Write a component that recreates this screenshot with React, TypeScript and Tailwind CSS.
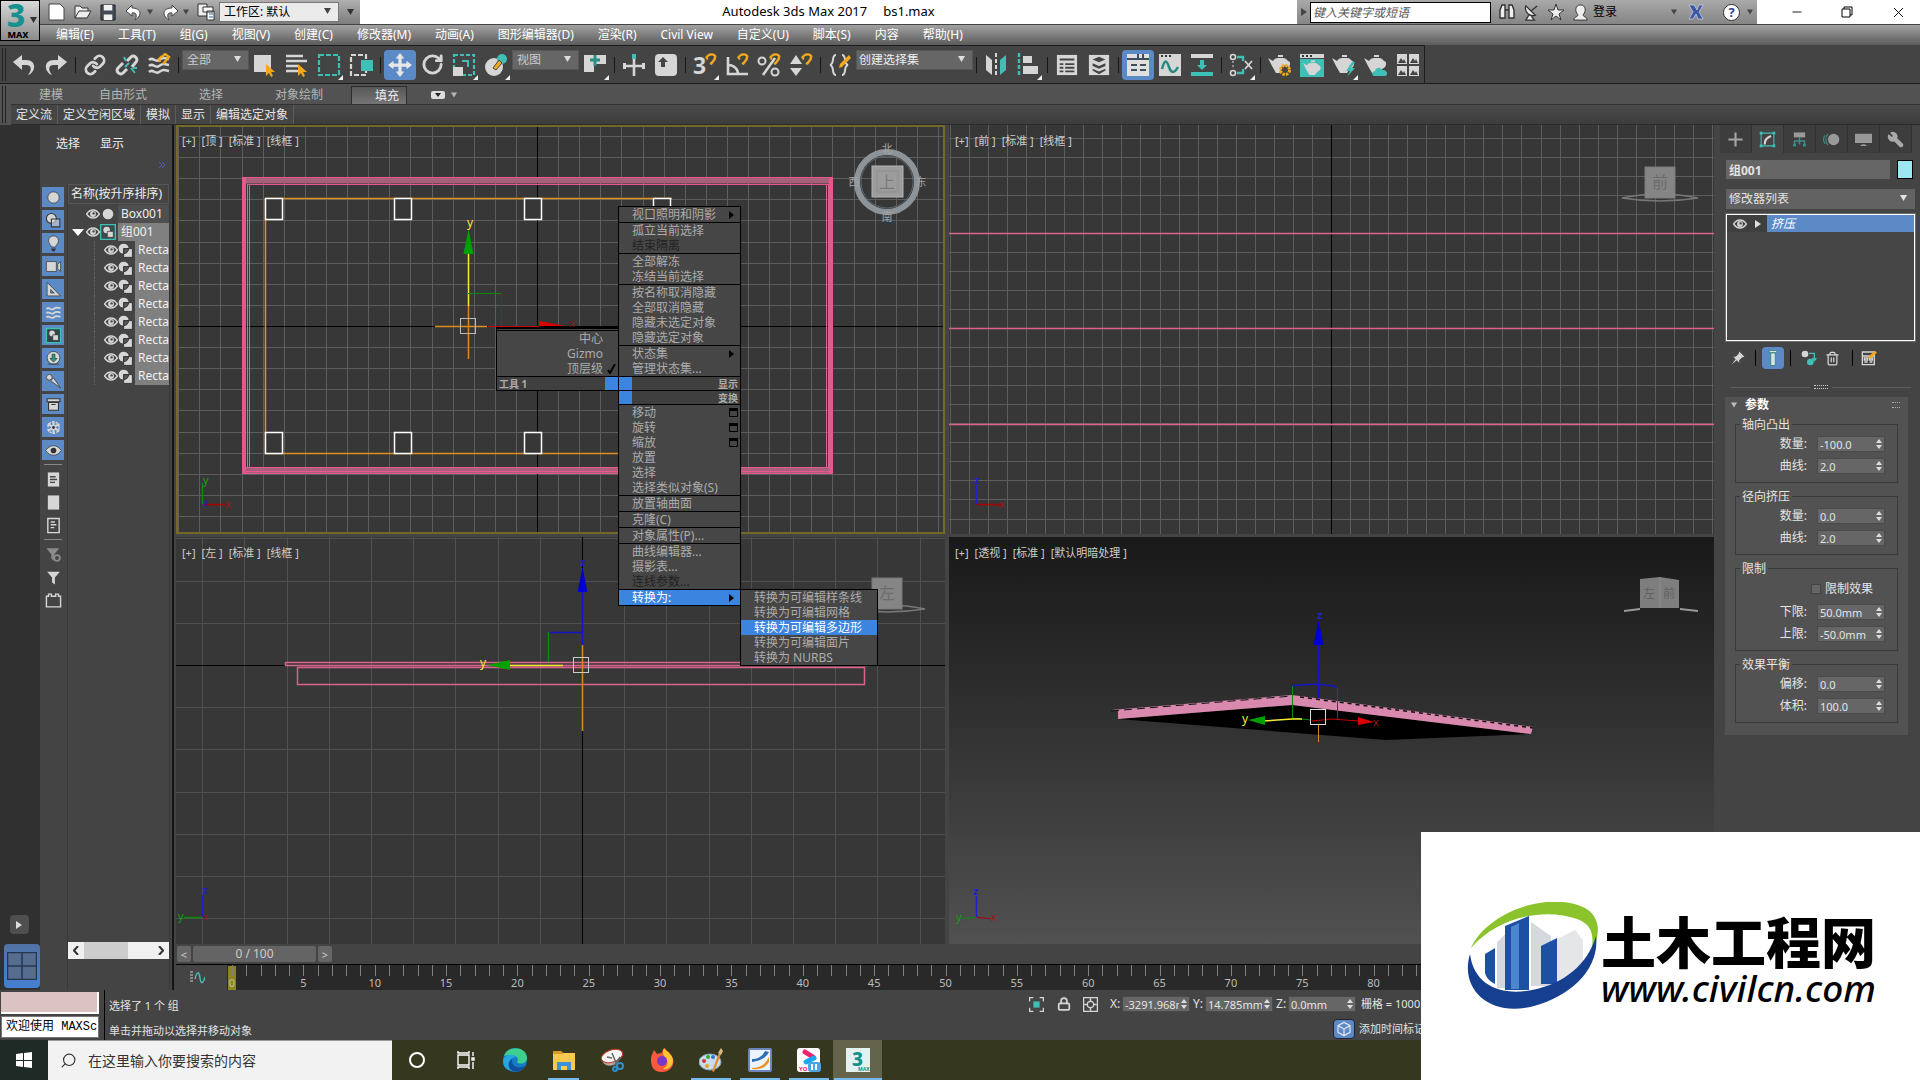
import React from 'react';
import clsx from 'clsx';
import { Link, Lock, Minus, RotateCw, Trash2, Wrench, X, Search } from 'lucide-react';

const LIGHT = '#d6d6d6';
const TEAL = '#3fbfb5';
const ORANGE = '#f2a91e';
const PINK = '#e8568f';

type IconProps = { children: React.ReactNode; size?: number; box?: number };

const Icon: React.FC<IconProps> = ({ children, size = 24, box = 24 }) => (
  <svg width={size} height={size} viewBox={`0 0 ${box} ${box}`} fill="none" className="shrink-0">
    {children}
  </svg>
);

/* ---------- icons ---------- */

const Cursor = () => <path d="M13 11v12l3-3 2 4 2-1-2-4h4z" fill={ORANGE} />;
const Magnet = () => (
  <path d="M13 5c3-5 8-4 9-2 1 3-2 5-4 8M13 5l2 1M17 10l2 1" stroke={ORANGE} strokeWidth="2.4" />
);
const Teapot = () => (
  <path d="M0 5l5 3c1-2 3-3 5-3h5c3 0 4 2 5 3 2 0 3 3 1 6l-4 3-2 3H8l-4-7zM10 2h5v2h-5z" fill={LIGHT} />
);
const Waves = () => (
  <path d="M2 7c4-4 6 3 10 0s6-2 10-1M2 13c4-4 6 3 10 0s6-2 10-1M2 19c4-4 6 3 10 0s6-2 10-1" stroke={LIGHT} strokeWidth="2.5" />
);
const Eye = ({ size = 14 }: { size?: number }) => (
  <Icon size={size}>
    <path d="M1 12c6-9 16-9 22 0-6 9-16 9-22 0z" stroke={LIGHT} strokeWidth="2.4" />
    <circle cx="12" cy="12" r="5" fill={LIGHT} />
    <circle cx="13" cy="11" r="2" fill="#444" />
  </Icon>
);
const Shapes = ({ size = 18 }: { size?: number }) => (
  <Icon size={size}>
    <circle cx="9" cy="9" r="8" fill={LIGHT} />
    <path d="M9 9h14v14H9z" fill={LIGHT} stroke="#333" strokeWidth="1.5" />
    <path d="M9 9h8a8 8 0 0 1-8 8z" fill="#555" stroke="#333" strokeWidth="1.5" />
  </Icon>
);
const GroupIcon = ({ size = 16 }: { size?: number }) => (
  <Icon size={size}>
    <path d="M1 1h22v22H1z" stroke={TEAL} strokeWidth="2" fill="#3b4a4a" />
    <circle cx="10" cy="9" r="5" fill={LIGHT} />
    <path d="M11 11h9v9h-9z" fill={LIGHT} stroke="#333" />
  </Icon>
);

type Tool = { name: string; icon?: React.ReactNode; on?: boolean; fly?: boolean; options?: string; wide?: boolean };

const SEP: Tool = { name: 'sep' };

const tools: Tool[] = [
  { name: '撤消', icon: <Icon><path d="M10 2v5h4c11 0 10 12 2 15 4-5 4-10-2-10h-4v5L1 9z" fill={LIGHT} /></Icon> },
  { name: '重做', icon: <Icon><path d="M14 2v5h-4C-1 7 0 19 8 22c-4-5-4-10 2-10h4v5l9-8z" fill={LIGHT} /></Icon> },
  SEP,
  { name: '链接', icon: <Link size={22} color={LIGHT} strokeWidth={3} /> },
  { name: '取消链接', icon: (
    <Icon>
      <path d="M12 16l-4 4c-3 3-8-2-5-5l5-5M12 8l4-4c3-3 8 2 5 5l-4 5" stroke={LIGHT} strokeWidth="3" />
      <path d="M10 14l4-4M16 15l4 5M9 4l2 4M18 15h4" stroke={TEAL} strokeWidth="2" />
    </Icon>) },
  { name: '绑定到空间扭曲', icon: <Icon><Waves /><path d="M13 9l-1-3 3-3M15 4l3-3 4 3-6 7" stroke={ORANGE} strokeWidth="2.4" /></Icon> },
  SEP,
  { name: '选择过滤器', options: '全部' },
  { name: '选择对象', icon: <Icon><path d="M1 2h17v17H1z" fill={LIGHT} /><Cursor /></Icon> },
  { name: '按名称选择', icon: <Icon><path d="M1 3h17M1 8h21M1 13h12M1 18h12" stroke={LIGHT} strokeWidth="2.4" /><Cursor /></Icon> },
  { name: '矩形选择区域', fly: true, icon: <Icon><path d="M2 2h20v20H2z" stroke={TEAL} strokeWidth="2.2" strokeDasharray="5 2" /></Icon> },
  { name: '窗口/交叉', icon: <Icon><path d="M2 2h15v20H2z" stroke={LIGHT} strokeWidth="2.2" strokeDasharray="5 2" /><path d="M12 7h12v11H12z" fill={TEAL} /></Icon> },
  SEP,
  { name: '选择并移动', on: true, icon: (
    <Icon size={26}>
      <path d="M12 1l4 5h-2.500v4.500h4.500V8l5 4-5 4v-2.500h-4.500v4.500H16l-4 5-4-5h2.500v-4.500H6V16l-5-4 5-4v2.500h4.500V6H8z" fill="#e6e6e6" />
    </Icon>) },
  { name: '选择并旋转', icon: <RotateCw size={23} color={LIGHT} strokeWidth={3} /> },
  { name: '选择并均匀缩放', fly: true, icon: (
    <Icon>
      <path d="M2 2h20v20H2z" stroke={TEAL} strokeWidth="2.2" strokeDasharray="4 2" />
      <path d="M1 14h10v9H1z" fill={LIGHT} />
      <path d="M10 8h6v6" stroke={TEAL} strokeWidth="2" />
    </Icon>) },
  { name: '选择并放置', fly: true, icon: <Icon><circle cx="10" cy="14" r="9" fill={LIGHT} /><circle cx="18" cy="6" r="5" fill={TEAL} /><path d="M9 15l6-8 3 3-6 7z" fill={ORANGE} stroke="#444" /></Icon> },
  { name: '参考坐标系', options: '视图' },
  { name: '使用轴点中心', fly: true, icon: <Icon><path d="M1 2h10v17H1zM11 2h12v9H11z" fill={LIGHT} /><path d="M12 2v11M7 7h10" stroke="#2a8f86" strokeWidth="3" /></Icon> },
  SEP,
  { name: '选择并操纵', icon: <Icon><path d="M12 5v18M1 13h22" stroke={LIGHT} strokeWidth="2.600" /><path d="M10 1h4v5h-4z" fill={TEAL} /><path d="M1 10h3v6H1zM20 10h3v6h-3z" fill={LIGHT} /></Icon> },
  { name: '键盘快捷键覆盖切换', icon: <Icon><rect x="1" y="1" width="22" height="22" rx="4" fill={LIGHT} /><path d="M9 4l5 5h-3v5H7V9H4z" fill="#444" /></Icon> },
  SEP,
  { name: '捕捉开关', fly: true, icon: <Icon><text x="0" y="21" fontSize="23" fontWeight="700" fill={LIGHT}>3</text><Magnet /></Icon> },
  { name: '角度捕捉切换', icon: <Icon><path d="M3 4v17h20M3 12c6 0 10 4 10 9" stroke={LIGHT} strokeWidth="2.600" /><Magnet /></Icon> },
  { name: '百分比捕捉切换', icon: <Icon><path d="M18 5L6 22" stroke={LIGHT} strokeWidth="2.500" /><circle cx="5" cy="8" r="3.500" stroke={LIGHT} strokeWidth="2" /><circle cx="18" cy="19" r="3.500" stroke={LIGHT} strokeWidth="2" /><Magnet /></Icon> },
  { name: '微调器捕捉切换', icon: <Icon><path d="M7 2l6 9H1zM7 23l6-8H1z" fill={LIGHT} /><Magnet /></Icon> },
  SEP,
  { name: '编辑命名选择集', icon: <Icon><path d="M8 2C3 2 7 11 2 12c5 1 1 10 6 10M14 2c5 0 1 9 6 10-5 1-1 10-6 10" stroke={LIGHT} strokeWidth="2" /><path d="M11 15l1-4 9-9 2 3-9 9z" fill={ORANGE} /></Icon> },
  { name: '命名选择集', options: '创建选择集', wide: true },
  SEP,
  { name: '镜像', icon: <Icon><path d="M2 2l6 5v15l-6-5z" fill={LIGHT} /><path d="M22 2l-6 5v15l6-5z" fill={TEAL} /><path d="M12 0v24" stroke={LIGHT} strokeWidth="2" strokeDasharray="4 2" /></Icon> },
  { name: '对齐', fly: true, icon: <Icon><path d="M3 0v24" stroke={TEAL} strokeWidth="2.400" strokeDasharray="4 2" /><path d="M7 3h9v7H7zM7 13h15v8H7z" fill={LIGHT} /></Icon> },
  SEP,
  { name: '层资源管理器', icon: <Icon size={22}><path d="M1 1h22v22H1z" fill={LIGHT} /><path d="M4 6h16M4 11h4M10 11h10M4 15h4M10 15h10M4 19h4M10 19h10" stroke="#444" strokeWidth="2" /></Icon> },
  { name: '层列表', icon: <Icon size={22}><path d="M1 1h22v22H1z" fill={LIGHT} /><path d="M5 6l7-3 7 3-7 3zM5 10l7 3 7-3v3l-7 3-7-3zM5 16l7 3 7-3v2l-7 4-7-4z" fill="#444" /></Icon> },
  SEP,
  { name: '显示功能区', on: true, icon: <Icon><path d="M1 1h22v22H1z" fill="#e0e0e0" /><path d="M1 6h22M12 1v5M17 1v5M5 12h6M14 12h6M5 17h6M14 17h6" stroke="#3f4d62" strokeWidth="2" /></Icon> },
  { name: '曲线编辑器', icon: <Icon><path d="M1 1h22v22H1z" fill={LIGHT} /><path d="M3 3h2M7 3h2M11 3h2" stroke="#333" strokeWidth="2" /><path d="M4 16c3-11 5-8 7-2s5 7 9 0" stroke="#23887f" strokeWidth="2.500" /></Icon> },
  { name: '图解视图', icon: <Icon><path d="M1 1h22v4H1z" fill={LIGHT} /><path d="M1 19h22v4H1z" fill={TEAL} /><path d="M10 7h4v5h3l-5 5-5-5h3z" fill={TEAL} /></Icon> },
  SEP,
  { name: '材质编辑器', fly: true, icon: (
    <Icon>
      <path d="M8 4h6v4M8 20h6v-4" stroke={TEAL} strokeWidth="2.400" />
      <circle cx="4" cy="4" r="2.500" stroke={LIGHT} strokeWidth="1.600" /><circle cx="4" cy="20" r="2.500" stroke={LIGHT} strokeWidth="1.600" />
      <path d="M4 8v8" stroke={LIGHT} strokeDasharray="2 2" /><path d="M16 8l7 8M23 8l-7 8" stroke={LIGHT} strokeWidth="1.800" />
    </Icon>) },
  SEP,
  { name: '渲染设置', icon: <Icon><Teapot /><circle cx="17" cy="17" r="4.500" stroke={ORANGE} strokeWidth="3" strokeDasharray="2.500 1" fill="#444" /></Icon> },
  { name: '渲染帧窗口', icon: <Icon><path d="M0 1h24v4H0z" fill={LIGHT} /><path d="M0 6h24v18H0z" fill={TEAL} /><path d="M2 3h2M6 3h2M10 3h2" stroke="#333" strokeWidth="2" /><g transform="translate(3 6) scale(.8)"><Teapot /></g></Icon> },
  { name: '渲染产品', fly: true, icon: <Icon><Teapot /><path d="M20 9l-6 9h4l-3 6 8-9h-4l4-6z" fill={TEAL} /></Icon> },
  { name: '在云中渲染', icon: <Icon><Teapot /><path d="M10 23c-3-1-2-5 1-5 1-4 6-4 7-1 5-1 7 5 3 6z" fill={TEAL} /></Icon> },
  { name: '打开渲染库', icon: (
    <Icon>
      <path d="M1 1h10v10H1zM13 1h10v10H13zM1 13h10v10H1zM13 13h10v10H13z" fill={LIGHT} />
      <path d="M2 10l3-5 2 3 1-2 2 4zM14 10l3-5 2 3 1-2 2 4zM2 22l3-5 2 3 1-2 2 4zM14 22l3-5 2 3 1-2 2 4z" fill="#444" />
    </Icon>) },
];

/* ---------- shared controls ---------- */

const DownArrow = ({ className }: { className?: string }) => (
  <svg width="7" height="6" viewBox="0 0 7 6" className={className}><path d="M0 0h7L3.500 6z" fill="currentColor" /></svg>
);

const DropDown: React.FC<{ label: string; value: string; className?: string; box?: string }> = ({ label, value, className, box }) => (
  <div className={clsx('relative', box)}>
    <select aria-label={label} className={clsx('block appearance-none w-full outline-none', className)}>
      <option>{value}</option>
    </select>
    <DownArrow className="absolute right-2 top-1.5 pointer-events-none" />
  </div>
);

const Spinner: React.FC<{ id: string; value: string }> = ({ id, value }) => (
  <span className="flex items-center w-[68px] h-4 bg-[#666] border border-[#4a4a4a] text-[#e4e4e4]">
    <input id={id} defaultValue={value} className="w-0 flex-1 bg-transparent pl-0.5 text-[11px] leading-none outline-none" />
    <svg width="10" height="12" viewBox="0 0 10 12" className="shrink-0">
      <path d="M5 1l3 4H2zM5 11l3-4H2z" fill="#ddd" />
    </svg>
  </span>
);

/* ---------- header ---------- */

const menus = ['编辑(E)', '工具(T)', '组(G)', '视图(V)', '创建(C)', '修改器(M)', '动画(A)', '图形编辑器(D)', '渲染(R)', 'Civil View', '自定义(U)', '脚本(S)', '内容', '帮助(H)'];

const Header = () => (
  <header className="flex bg-[#5c5c5c]">
    <button aria-label="应用程序" className="relative w-10 h-[41px] shrink-0 border border-black bg-gradient-to-b from-[#d8d8d8] to-[#8c8c8c]">
      <svg width="30" height="39" viewBox="0 0 30 39">
        <text x="15" y="26" fontSize="32" fontWeight="800" textAnchor="middle" fill="#16918f">3</text>
        <text x="17" y="37" fontSize="9" fontWeight="800" textAnchor="middle" fill="#000">MAX</text>
      </svg>
      <DownArrow className="absolute right-0.5 top-4 text-[#333]" />
    </button>
    <div className="flex-1 flex flex-col">
      <div className="h-6 flex bg-white text-black">
        <div className="w-80 flex items-center gap-2 pl-2 bg-gradient-to-b from-[#b0b0b0] to-[#7d7d7d]">
          <button aria-label="新建"><Icon size={18} box={18}><path d="M1 1h11l4 4v12H1z" fill="#fff" stroke="#444" /></Icon></button>
          <button aria-label="打开"><Icon size={18} box={18}><path d="M1 15V3h5l2 2h6v3M1 15L5 8h12l-4 7z" fill="#eee" stroke="#333" /></Icon></button>
          <button aria-label="保存"><Icon size={17} box={18}><path d="M1 1h15v16H1z" fill="#444b55" stroke="#222" /><path d="M4 1h9v6H4zM4 11h9v6H4z" fill="#f2f2f2" /></Icon></button>
          <button aria-label="撤消"><Icon size={18} box={18}><path d="M7 2L1 8l6 5V10c5-1 5 3 3 7 8-5 6-12-3-12z" fill="#fff" stroke="#444" /></Icon></button>
          <DownArrow className="text-[#444] -ml-1 w-1.5" />
          <button aria-label="重做"><Icon size={18} box={18}><path d="M11 2l6 6-6 5V10c-5-1-5 3-3 7-8-5-6-12 3-12z" fill="#fff" stroke="#444" /></Icon></button>
          <DownArrow className="text-[#444] -ml-1 w-1.5" />
          <button aria-label="项目文件夹"><Icon size={18} box={18}><path d="M1 1h9v12H1z" fill="#eee" stroke="#333" /><path d="M6 4h10v5H6zM10 8h7v9h-7z" fill="#fff" stroke="#333" /><path d="M12 11h4M12 14h4" stroke="#2c5f9e" /></Icon></button>
          <DropDown label="工作区" value="工作区: 默认" box="flex-1 h-5 -ml-1 text-[#444]" className="h-5 bg-[#ebebeb] border border-[#777] pl-1 text-xs leading-none text-black" />
          <DownArrow className="mr-1.5 text-[#333]" />
        </div>
        <div className="flex-1 flex items-center justify-center gap-4 text-[13px] whitespace-pre">
          <h1>Autodesk 3ds Max 2017</h1>
          <span>bs1.max</span>
        </div>
        <div className="w-[460px] flex items-center gap-[7px] bg-gradient-to-b from-[#a9a9a9] to-[#858585]">
          <svg width="6" height="8" viewBox="0 0 6 8" className="ml-1 -mr-1"><path d="M0 0l6 4-6 4z" fill="#444" /></svg>
          <input aria-label="搜索" placeholder="键入关键字或短语" className="w-[181px] h-[21px] bg-white border border-black px-0.5 text-xs italic placeholder:text-[#555]" />
          <button aria-label="查找"><Icon size={18} box={18}><path d="M2 15V7l2-5h3v13zM16 15V7l-2-5h-3v13zM7 7h4" fill="#eee" stroke="#333" strokeWidth="1.400" /></Icon></button>
          <button aria-label="通讯"><Icon size={17} box={18}><path d="M3 2c-2 6 4 12 10 10zM9 7l6-5M6 12l-3 5h9l-3-4" fill="#eee" stroke="#333" strokeWidth="1.400" /></Icon></button>
          <button aria-label="收藏"><Icon size={18} box={18}><path d="M9 1l2 6h6l-5 4 2 6-5-4-5 4 2-6-5-4h6z" fill="#eee" stroke="#333" /></Icon></button>
          <button className="flex items-center gap-1 text-xs"><Icon size={17} box={18}><path d="M2 17c0-4 5-3 4-6-3-3-3-10 3-10s6 7 3 10c-1 3 4 2 4 6z" fill="#eee" stroke="#333" /></Icon>登录</button>
          <DownArrow className="text-[#444] w-1.5 ml-auto" />
          <button aria-label="Exchange" className="ml-1 mr-3"><Icon size={16} box={16}><path d="M1 1h5l3 5 2-5h4l-4 7 4 7h-5L8 10l-3 5H1l4-7z" fill="#3a56a5" stroke="#dfe4f2" strokeWidth=".6" /></Icon></button>
          <button aria-label="帮助" className="w-[17px] h-[17px] rounded-full bg-white border border-[#333] text-[13px] leading-none font-bold text-[#2b4595]">?</button>
          <DownArrow className="text-[#444] w-1.5 mr-1" />
        </div>
        <div className="w-[163px] flex items-center justify-around pl-6 pr-1">
          <button aria-label="最小化"><Minus size={14} strokeWidth={1.5} /></button>
          <button aria-label="还原" className="ml-5"><Icon size={12} box={12}><path d="M1 3h8v8H1zM3 3V1h8v8H9" stroke="#000" /></Icon></button>
          <button aria-label="关闭" className="ml-5"><X size={17} strokeWidth={1.3} /></button>
        </div>
      </div>
      <nav className="h-[21px] flex items-center gap-6 pl-4 border-t border-[#444] bg-gradient-to-b from-[#a2a2a2] to-[#5c5c5c] text-xs text-white">
        {menus.map((m) => <button key={m} className="whitespace-nowrap leading-none">{m}</button>)}
      </nav>
    </div>
  </header>
);

const Grip = () => <div className="w-1 my-0.5 ml-0.5 border-x border-[#222] self-stretch" />;

const Toolbar = () => (
  <div className="h-[39px] flex bg-[#444] border-b border-[#1c1c1c]">
    <div className="flex items-center border-r border-t border-[#1c1c1c]">
      <Grip />
      <span className="w-0.5" />
      {tools.map((t, i) => {
        if (t.name === 'sep') return <span key={i} className="w-[7px] flex justify-center"><i className="w-px h-4 bg-[#151515]" /></span>;
        if (t.options) {
          return (
            <DropDown
              key={i}
              label={t.name}
              value={t.options}
              box={clsx('self-start mt-1 text-[#ddd]', t.wide ? 'w-[117px]' : 'w-[67px]')}
              className={clsx('h-5 border border-[#555] bg-[#666] text-xs leading-none', t.wide ? 'pl-0.5 text-[#eee]' : 'pl-1 text-[#ccc]')}
            />
          );
        }
        return (
          <button key={i} aria-label={t.name} className={clsx('relative w-8 h-[30px] flex items-center justify-center', t.on && 'bg-[#5b8ac6] rounded-sm')}>
            {t.icon}
            {t.fly && <svg width="5" height="5" viewBox="0 0 5 5" className="absolute right-0.5 bottom-0"><path d="M5 0v5H0z" fill="#eee" /></svg>}
          </button>
        );
      })}
    </div>
  </div>
);

const Ribbon = () => (
  <div className="flex bg-[#525252]">
    <Grip />
    <div className="flex-1 flex flex-col ml-[5px]">
      <div className="h-[21px] pt-0.5 flex items-stretch bg-[#525252] border-b border-[#333] text-xs text-[#b5b5b5]">
        <button className="ml-7 w-[60px] text-left">建模</button>
        <button className="w-[100px] text-left">自由形式</button>
        <button className="w-[76px] text-left">选择</button>
        <button className="w-[76px] text-left">对象绘制</button>
        <button className="w-14 pl-4 border border-b-0 border-[#2c2c2c] bg-gradient-to-b from-[#585858] to-[#757575] text-[#eee]">填充</button>
        <button aria-label="功能区显示" className="ml-6 flex items-center gap-1.5">
          <svg width="14" height="8" viewBox="0 0 14 8"><rect width="14" height="8" rx="2" fill="#ddd" /><path d="M4 2h6L7 6z" fill="#222" /></svg>
          <DownArrow className="w-1.5" />
        </button>
      </div>
      <div className="h-5 flex items-center bg-gradient-to-b from-[#4b4b4b] to-[#3c3c3c] border-b border-[#2a2a2a] text-xs text-[#e6e6e6]">
        {['定义流', '定义空闲区域', '模拟', '显示', '编辑选定对象'].map((t) => (
          <button key={t} className="h-full px-[5px] border-r border-[#5c5c5c] bg-[#454545]">{t}</button>
        ))}
      </div>
    </div>
  </div>
);

/* ---------- scene explorer ---------- */

const filters: React.ReactNode[] = [
  <circle cx="12" cy="12" r="8" fill={LIGHT} stroke="#333" />,
  <><circle cx="9" cy="9" r="7" fill={LIGHT} stroke="#333" strokeWidth="1.500" /><path d="M9 10h12v11H9z" fill={LIGHT} fillOpacity=".6" stroke="#333" strokeWidth="1.500" /></>,
  <><path d="M9 17c0-3-4-4-4-9 0-9 14-9 14 0 0 5-4 6-4 9z" fill={LIGHT} stroke="#333" /><path d="M9 20h6M10 22h4" stroke="#333" strokeWidth="2" /></>,
  <path d="M2 5h14v14H2zM18 9l4-4v14l-4-4z" fill={LIGHT} stroke="#333" />,
  <path d="M3 2l19 19H3zM8 12v5h5z" fill={LIGHT} fillRule="evenodd" stroke="#333" />,
  <Waves />,
  <><path d="M2 2h20v20H2z" fill="#344" stroke={TEAL} strokeWidth="2" /><circle cx="10" cy="9" r="4" fill={LIGHT} /><path d="M11 11h8v8h-8z" fill={LIGHT} stroke="#333" /></>,
  <><circle cx="12" cy="11" r="9" fill={LIGHT} stroke="#333" /><path d="M10 6h4v6h3l-5 5-5-5h3zM4 20h16" fill="#2a9a86" stroke="#333" /></>,
  <><circle cx="6" cy="6" r="4" fill={LIGHT} stroke="#333" /><path d="M8 11l4-4 10 14z" fill={LIGHT} stroke="#333" /></>,
  <path d="M3 4h18v4H3zM5 9h14v11H5zM9 12h6" fill={LIGHT} stroke="#333" strokeWidth="1.500" />,
  <><path d="M12 3v18M4 7l16 10M20 7L4 17" stroke={LIGHT} strokeWidth="3" /><circle cx="12" cy="12" r="8" stroke={LIGHT} strokeWidth="2" strokeDasharray="3 2" /><circle cx="12" cy="12" r="2" fill="#333" /></>,
  <><path d="M1 12c6-9 16-9 22 0-6 9-16 9-22 0z" fill={LIGHT} stroke="#333" /><circle cx="12" cy="12" r="4" fill="#333" /></>,
];

const listIcons: React.ReactNode[] = [
  <><path d="M4 2h16v20H4z" fill={LIGHT} /><path d="M7 8h8M7 12h10M7 16h7" stroke="#444" strokeWidth="2" /></>,
  <path d="M4 2h16v20H4z" fill={LIGHT} />,
  <path d="M4 2h16v20H4zM8 7h6M8 11h8M8 15h5" stroke={LIGHT} strokeWidth="2" />,
];

const filterIcons: React.ReactNode[] = [
  <><path d="M2 3h18l-7 9v9l-4-3v-6z" fill="#8a8a8a" /><circle cx="17" cy="17" r="4" stroke="#8a8a8a" strokeWidth="2.500" fill="#444" /></>,
  <path d="M3 4h18l-7 8v10l-4-3v-7z" fill={LIGHT} />,
  <path d="M2 6h3V3h4v3h6V3h4v3h3v15H2z" stroke={LIGHT} strokeWidth="2" />,
];

const Chevrons = () => (
  <button aria-label="更多" className="self-end">
    <svg width="8" height="6" viewBox="0 0 8 6" fill="none" className="block"><path d="M1 0l3 3-3 3M4 0l3 3-3 3" stroke="#5457b5" /></svg>
  </button>
);

const SceneExplorer = () => (
  <aside className="w-[134px] shrink-0 flex flex-col bg-[#444] border-r-2 border-[#151515] pt-[11px] text-xs">
    <div className="flex gap-5 pl-4 text-[#eee]">
      <button>选择</button>
      <button>显示</button>
    </div>
    <div className="flex flex-col h-[31px] pt-2.5 pr-1.5"><Chevrons /></div>
    <div className="flex-1 flex pt-px">
      <div className="flex flex-col gap-[3px] w-[22px] ml-0.5 mr-[3px] pt-[3px]">
        {filters.map((f, i) => (
          <button key={i} aria-label={`显示过滤器 ${i + 1}`} className="h-5 w-[22px] bg-[#5b8ac6] flex items-center justify-center">
            <Icon size={17}>{f}</Icon>
          </button>
        ))}
        <hr className="border-[#888] mx-0.5 my-px" />
        {listIcons.map((f, i) => <button key={i} aria-label={`列表 ${i + 1}`} className="h-5 flex items-center justify-center"><Icon size={17}>{f}</Icon></button>)}
        <hr className="border-[#888] mx-0.5 my-px" />
        {filterIcons.map((f, i) => <button key={i} aria-label={`筛选 ${i + 1}`} className="h-5 flex items-center justify-center"><Icon size={17}>{f}</Icon></button>)}
      </div>
      <div className="w-[103px] flex flex-col border-x border-[#393939]">
        <button className="h-5 px-0.5 border border-[#555] text-left leading-[18px] text-[#eee] whitespace-nowrap overflow-hidden">名称(按升序排序)</button>
        <ul className="text-[#f0f0f0] pt-px">
          <li className="h-[18px] flex items-center pl-[18px]">
            <Eye />
            <Icon size={16}><circle cx="12" cy="12" r="8" fill={LIGHT} /></Icon>
            <span className="ml-0.5 flex-1 pl-[3px] bg-[#4f4f4f] leading-[18px]">Box001</span>
          </li>
          <li className="h-[18px] flex items-center pl-1">
            <svg width="12" height="7" viewBox="0 0 12 7" className="mr-0.5"><path d="M0 0h12L6 7z" fill="#fff" /></svg>
            <Eye />
            <GroupIcon />
            <span className="ml-0.5 flex-1 pl-[3px] bg-[#808080] leading-[18px]">组001</span>
          </li>
          {Array.from({ length: 8 }, (_, i) => (
            <li key={i} className="h-[18px] flex items-center pl-[26px]">
              <span className="w-2.5 h-full border-l border-dotted border-[#666]" />
              <Eye />
              <Shapes size={15} />
              <span className="ml-0.5 flex-1 pl-[3px] bg-[#808080] leading-[18px] overflow-hidden">Recta</span>
            </li>
          ))}
        </ul>
        <div className="mt-auto mb-[31px] h-[17px] flex items-center bg-[#f0f0f0] text-[#444]">
          <button aria-label="向左" className="w-4 flex justify-center"><svg width="6" height="9" viewBox="0 0 6 9" fill="none"><path d="M5 0L1 4.500 5 9" stroke="#333" strokeWidth="2" /></svg></button>
          <span className="w-11 h-full bg-[#cdcdcd]" />
          <button aria-label="向右" className="ml-auto w-4 flex justify-center"><svg width="6" height="9" viewBox="0 0 6 9" fill="none"><path d="M1 0l4 4.500L1 9" stroke="#333" strokeWidth="2" /></svg></button>
        </div>
      </div>
    </div>
  </aside>
);

/* ---------- viewports ---------- */

const steps = (from: number, to: number, center: number, step: number) => {
  const out: number[] = [];
  for (let v = center - Math.floor((center - from) / step) * step; v < to; v += step) out.push(Math.round(v) + 0.5);
  return out;
};

type GridProps = { x: number; y: number; w: number; h: number; cx: number; cy: number; step: number; color: string };

const Grid: React.FC<GridProps> = ({ x, y, w, h, cx, cy, step, color }) => (
  <g strokeWidth="1" stroke={color}>
    {steps(x, x + w, cx, step).map((v) => <path key={`v${v}`} d={`M${v} ${y}v${h}`} />)}
    {steps(y, y + h, cy, step).map((v) => <path key={`h${v}`} d={`M${x} ${v}h${w}`} />)}
    <path d={`M${Math.round(cx) + 0.5} ${y}v${h}M${x} ${Math.round(cy) + 0.5}h${w}`} stroke="#000" />
  </g>
);

type ViewProps = { name: string; shade?: string; box: string; active?: boolean; dark?: boolean; children: React.ReactNode };

const Viewport: React.FC<ViewProps> = ({ name, shade = '线框', box, active, dark, children }) => (
  <section className={clsx('relative min-w-0 min-h-0 overflow-hidden', dark ? 'bg-gradient-to-b from-[#191919] to-[#515151]' : 'bg-[#373737]')}>
    <svg viewBox={box} preserveAspectRatio="xMinYMin slice" className="block w-full h-full" fill="none">{children}</svg>
    <div className="absolute left-1.5 top-2.5 flex gap-1.5 text-[11px] leading-none text-[#ccc]">
      {['[+]', `[${name} ]`, '[标准 ]', `[${shade} ]`].map((t) => <button key={t}>{t}</button>)}
    </div>
    {active && <div className="absolute inset-0 border-2 border-[#75692a] pointer-events-none" />}
  </section>
);

const Cube = ({ x, y, face }: { x: number; y: number; face: string }) => (
  <g>
    <path d={`M${x - 38} ${y + 16}q38-8 76 0q-38 6-76 0z`} stroke="#777" strokeWidth="1.500" />
    <rect x={x - 15} y={y - 15} width="30" height="31" fill="#858585" stroke="#7a7a7a" />
    <text x={x} y={y + 6} fontSize="16" fill="#6c6c6c" textAnchor="middle">{face}</text>
  </g>
);

const whites = [[265, 198], [394, 198], [524, 198], [653, 198], [265, 432], [394, 432], [524, 432]];

const TopView = () => (
  <Viewport name="顶" box="176 125 769 409" active>
    <Grid x={176} y={125} w={769} h={409} cx={537} cy={326} step={21.1} color="#5d5d5d" />
    <path d="M242 180.500h591M242 470.500h591" stroke="#a8607a" strokeWidth="6" />
    <path d="M242 177.500h591M247 184.500h581M242 467.500h591M242 471.500h591M242 473.500h591" stroke={PINK} />
    <path d="M244 177v297M831 177v297" stroke={PINK} strokeWidth="4" />
    <path d="M247.500 184v284M249.500 185v282M828.500 184v284M826.500 185v282" stroke="#d46a93" />
    <path d="M265.500 198.500H672M265.500 198.500V453.500H672" stroke="#e08f23" strokeWidth="1.500" />
    {whites.map(([x, y]) => <rect key={`${x}-${y}`} x={x + 0.5} y={y + 0.5} width="17" height="21" fill="#373737" stroke="#fff" strokeWidth="1.500" />)}
    <path d="M435 326.500h52M468.500 305v54" stroke="#d98b1f" strokeWidth="1.500" />
    <path d="M468.500 254v52" stroke="#f5ec30" strokeWidth="1.500" />
    <path d="M468.500 229l5 25h-10z" fill="#00a000" />
    <path d="M468 293.500h33" stroke="#0a8a0a" />
    <path d="M501.500 293v33M488 326.500h51" stroke="#c00" />
    <path d="M539 321l27 5h-27z" fill="#d00" />
    <rect x="460.500" y="318.500" width="15" height="15" stroke="#bbb" />
    <text x="467" y="227" fontSize="12" fill="#f5ec30">y</text>
    <text x="569" y="327" fontSize="11" fill="#8b1414">x</text>
    <path d="M202.500 483v21" stroke="#0a8a0a" strokeWidth="1.500" /><path d="M203 504.500h22" stroke="#a00" strokeWidth="1.500" />
    <text x="203" y="484" fontSize="11" fill="#0fa00f">y</text>
    <text x="203" y="506" fontSize="9" fontWeight="700" fill="#2020d0">z</text>
    <text x="225" y="508" fontSize="11" fill="#a01414">x</text>
    <circle cx="887" cy="182" r="30" stroke="#8d9499" strokeWidth="6" />
    <circle cx="887" cy="182" r="26" stroke="#5d676d" />
    <rect x="872" y="166" width="31" height="31" fill="#9c9c9c" stroke="#b5b5b5" />
    <rect x="877" y="171" width="21" height="21" stroke="#8e8e8e" />
    <text x="887" y="188" fontSize="16" fill="#7a7a7a" textAnchor="middle">上</text>
    <g fontSize="11" fill="#a5a5a5" textAnchor="middle">
      <text x="887" y="153">北</text><text x="887" y="221">南</text><text x="854" y="186">西</text><text x="921" y="186">东</text>
    </g>
  </Viewport>
);

const FrontView = () => (
  <Viewport name="前" box="949 125 765 409">
    <Grid x={949} y={125} w={765} h={409} cx={1331} cy={328} step={19.05} color="#5d5d5d" />
    <path d="M949 233.500h765M949 328.500h765M949 424.500h765" stroke="#d9638f" strokeWidth="1.500" />
    <Cube x={1660} y={182} face="前" />
    <path d="M976.500 485v19" stroke="#2020d0" strokeWidth="1.500" /><path d="M977 504.500h24" stroke="#a00" strokeWidth="1.500" />
    <text x="974" y="484" fontSize="11" fontWeight="700" fill="#2020d0">z</text>
    <text x="999" y="508" fontSize="11" fill="#a01414">x</text>
  </Viewport>
);

const LeftView = () => (
  <Viewport name="左" box="176 537 769 407">
    <Grid x={176} y={537} w={769} h={407} cx={582} cy={665} step={42.2} color="#505050" />
    <Cube x={887} y={593} face="左" />
    <path d="M285.500 662.500h582.500M285.500 665.500H868M297 667.500h568M285.500 662v4M297.500 667v17.500h567V667" stroke="#d9638f" strokeWidth="1.500" />
    <path d="M582.500 592v53M548 632.500h34" stroke="#1414c8" strokeWidth="1.500" />
    <path d="M582.500 645v86" stroke="#d98b1f" strokeWidth="1.500" />
    <path d="M582.500 567l5 25h-10z" fill="#0000d0" />
    <path d="M548.500 632v30" stroke="#0a8a0a" strokeWidth="1.500" />
    <path d="M510 665.500h53" stroke="#f5ec30" strokeWidth="1.500" />
    <path d="M487 665l23-5v10z" fill="#00a000" />
    <rect x="573.500" y="657.500" width="15" height="15" stroke="#ccc" />
    <text x="480" y="667" fontSize="12" fill="#f5ec30">y</text>
    <text x="580" y="566" fontSize="11" fontWeight="700" fill="#2020d0">z</text>
    <path d="M202.500 895v22" stroke="#2020d0" strokeWidth="1.500" /><path d="M184 917.500h18" stroke="#0a8a0a" strokeWidth="1.500" />
    <text x="202" y="894" fontSize="11" fontWeight="700" fill="#2020d0">z</text>
    <text x="178" y="920" fontSize="11" fill="#0fa00f">y</text>
    <text x="203" y="920" fontSize="9" fill="#a01414">x</text>
  </Viewport>
);

const PerspectiveView = () => (
  <Viewport name="透视" shade="默认明暗处理" box="949 537 765 407" dark>
    <path d="M1118 719l174-14 239 29-145 6z" fill="#000" />
    <path d="M1111 710l181-15 241 32-2 7-239-29-174 14v-8z" fill="#d889ad" />
    <path d="M1111 711l181-15" stroke="#111" strokeDasharray="8 5" />
    <path d="M1300 697l233 31" stroke="#111" strokeWidth="1.500" strokeDasharray="4 4" />
    <path d="M1318.500 645v53M1292 686q26-4 45 1" stroke="#1414c8" strokeWidth="1.500" />
    <path d="M1318.500 620l5 25h-10z" fill="#0000d0" />
    <path d="M1292.500 686v32l18 2" stroke="#0a8a0a" />
    <path d="M1337.500 687v32M1312 721l20-2 26 2" stroke="#c00" />
    <path d="M1264 721l28-2h10" stroke="#f5ec30" strokeWidth="1.500" />
    <path d="M1248 720l17-4v9z" fill="#00a000" />
    <path d="M1358 717v8l16-3z" fill="#d00" />
    <path d="M1318.500 724v18" stroke="#d98b1f" />
    <rect x="1310.500" y="709.500" width="15" height="15" stroke="#ddd" />
    <text x="1242" y="723" fontSize="12" fill="#f5ec30">y</text>
    <text x="1373" y="726" fontSize="11" fill="#a01414">x</text>
    <text x="1317" y="619" fontSize="11" fontWeight="700" fill="#2020d0">z</text>
    <path d="M1624 611l16-2M1680 609l18 2" stroke="#999" strokeWidth="2" />
    <path d="M1640 579l20-2 19 3v28h-39z" fill="#7e7e7e" />
    <path d="M1660 577v31" stroke="#8c8c8c" />
    <text x="1643" y="598" fontSize="12" fill="#626262">左</text><text x="1663" y="598" fontSize="12" fill="#626262">前</text>
    <path d="M976.500 896v21" stroke="#2020d0" strokeWidth="1.500" /><path d="M977 917.500l14 1" stroke="#a00" /><path d="M962 918.500l14-1" stroke="#0a8a0a" />
    <text x="973" y="895" fontSize="11" fontWeight="700" fill="#2020d0">z</text>
    <text x="956" y="921" fontSize="11" fill="#0fa00f">y</text>
    <text x="991" y="921" fontSize="11" fill="#a01414">x</text>
  </Viewport>
);

/* ---------- quad menu ---------- */

type Entry = { t: string; off?: boolean; sub?: boolean; opt?: boolean; hot?: boolean };

const displayMenu: Entry[][] = [
  [{ t: '视口照明和阴影', sub: true }],
  [{ t: '孤立当前选择' }, { t: '结束隔离', off: true }],
  [{ t: '全部解冻' }, { t: '冻结当前选择' }],
  [{ t: '按名称取消隐藏' }, { t: '全部取消隐藏' }, { t: '隐藏未选定对象' }, { t: '隐藏选定对象' }],
  [{ t: '状态集', sub: true }, { t: '管理状态集...' }],
];

const transformMenu: Entry[][] = [
  [{ t: '移动', opt: true }, { t: '旋转', opt: true }, { t: '缩放', opt: true }, { t: '放置' }, { t: '选择' }, { t: '选择类似对象(S)' }],
  [{ t: '放置轴曲面' }],
  [{ t: '克隆(C)' }],
  [{ t: '对象属性(P)...' }],
  [{ t: '曲线编辑器...' }, { t: '摄影表...' }, { t: '连线参数...', off: true }],
  [{ t: '转换为:', sub: true, hot: true }],
];

const convertMenu: Entry[] = [
  { t: '转换为可编辑样条线' },
  { t: '转换为可编辑网格' },
  { t: '转换为可编辑多边形', hot: true },
  { t: '转换为可编辑面片' },
  { t: '转换为 NURBS' },
];

const MenuItem = ({ e }: { e: Entry }) => (
  <button
    role="menuitem"
    disabled={e.off}
    className={clsx('w-full h-[15px] flex items-center justify-between pl-[13px] pr-0.5 whitespace-nowrap leading-[15px]', e.hot && 'bg-[#3b84e0] text-white', e.off && 'text-[#222]')}
  >
    {e.t}
    {e.sub && <svg width="5" height="8" viewBox="0 0 5 8" className="mr-1"><path d="M0 0l5 4-5 4z" fill="#000" /></svg>}
    {e.opt && <svg width="9" height="9" viewBox="0 0 9 9"><path d="M.5.5h8v8h-8z" fill="none" stroke="#000" /><path d="M0 0h9v3H0z" fill="#000" /></svg>}
  </button>
);

const MenuGroups = ({ groups }: { groups: Entry[][] }) => (
  <>
    {groups.map((g, i) => (
      <div key={i} className="border-t border-black">{g.map((e) => <MenuItem key={e.t} e={e} />)}</div>
    ))}
  </>
);

const QuadMenu = () => (
  <div role="menu" className="absolute left-[496px] top-[206px] flex items-start text-xs text-[#acacac]">
    <div className="mt-[121px] w-[122px] border-t-2 border-l border-b border-black bg-[#464646]">
      <div className="mt-px border-t border-black">
        {['中心', 'Gizmo', '顶层级'].map((t) => (
          <button key={t} role="menuitem" className="w-full h-[15px] flex items-center justify-end gap-1 pr-0.5 leading-[15px]">
            {t}
            <svg width="9" height="10" viewBox="0 0 9 10" fill="none">{t === '顶层级' && <path d="M1 6l2 3 5-9" stroke="#000" strokeWidth="2" />}</svg>
          </button>
        ))}
      </div>
      <div className="h-3.5 flex items-center justify-between border-t border-black bg-[#3f3f3f] pl-0.5 text-[10px] leading-none font-bold">
        工具 1<span className="w-[13px] h-[13px] bg-[#3b84e0]" />
      </div>
    </div>
    <div className="w-[123px] border-x border-b border-black bg-[#464646]">
      <MenuGroups groups={displayMenu} />
      {['显示', '变换'].map((t) => (
        <div key={t} className="h-3.5 flex items-center justify-between border-t border-black bg-[#3f3f3f] pr-0.5 text-[10px] leading-none font-bold">
          <span className="w-[13px] h-[13px] bg-[#3b84e0]" />{t}
        </div>
      ))}
      <MenuGroups groups={transformMenu} />
    </div>
    <div className="mt-[383px] -ml-px w-[138px] border border-black bg-[#464646]">
      {convertMenu.map((e) => <MenuItem key={e.t} e={e} />)}
    </div>
  </div>
);

/* ---------- timeline ---------- */

const FRAME = 14.27;

const Timeline = () => (
  <>
    <div className="h-5 flex items-center gap-0.5 pl-px bg-[#444] text-xs text-[#ccc]">
      <button aria-label="上一帧" className="w-3.5 h-4 bg-[#666] rounded-xs text-[11px] leading-none">&lt;</button>
      <button className="w-[123px] h-4 bg-[#646464] rounded-xs leading-none">0 / 100</button>
      <button aria-label="下一帧" className="w-3.5 h-4 bg-[#666] rounded-xs text-[11px] leading-none">&gt;</button>
    </div>
    <div className="h-[26px] flex border-t border-black bg-[#444]">
      <button aria-label="迷你曲线编辑器" className="w-[51px] flex items-center pl-3.5 h-6">
        <svg width="15" height="13" viewBox="0 0 15 13" fill="none"><path d="M0 1h3M0 4h3M0 7h3M0 10h3" stroke="#ccc" /><path d="M5 8c2-8 4-8 5-1s3 6 5-1" stroke={TEAL} strokeWidth="1.500" /></svg>
      </button>
      <svg className="flex-1 h-[25px] bg-[#292929]" fill="none">
        <rect x="1" y="1" width="8" height="24" fill="#8d8424" />
        {Array.from({ length: 101 }, (_, i) => {
          const x = Math.round(5 + i * FRAME) + 0.5;
          return <path key={i} d={`M${x} 0v11`} stroke="#808080" />;
        })}
        {Array.from({ length: 21 }, (_, i) => (
          <text key={i} x={5 + i * 5 * FRAME} y="22" fontSize="11" textAnchor="middle" fill="#bdbdbd">{i * 5}</text>
        ))}
      </svg>
    </div>
  </>
);

/* ---------- command panel ---------- */

const tabs: React.ReactNode[] = [
  <path d="M12 2v20M2 12h20" stroke="#a5a5a5" strokeWidth="3" />,
  <><path d="M3 3h18v18H3z" stroke={TEAL} strokeWidth="1.500" /><path d="M1 1h4v4H1zM19 1h4v4h-4zM1 19h4v4H1zM19 19h4v4h-4z" fill={TEAL} /><path d="M8 19c0-7 3-10 9-12" stroke={LIGHT} strokeWidth="3" /></>,
  <><path d="M4 2h16v7H4z" fill="#999" /><path d="M12 9v5M5 19v-5h14v5M12 14v5" stroke="#3c8f8a" strokeWidth="2" /><path d="M3 18h4v4H3zM17 18h4v4h-4z" fill="#3c8f8a" /></>,
  <><circle cx="15" cy="12" r="8" fill="#999" /><path d="M7 4c-4 4-4 12 0 16M3 6c-3 4-3 8 0 12" stroke="#3c8f8a" strokeWidth="1.500" /></>,
  <path d="M0 4h24v13H0zM7 21c3-3 7-3 10 0z" fill="#999" />,
];

const groups = [
  { title: '轴向凸出', rows: [['数量', '-100.0'], ['曲线', '2.0']] },
  { title: '径向挤压', rows: [['数量', '0.0'], ['曲线', '2.0']] },
  { title: '限制', check: '限制效果', rows: [['下限', '50.0mm'], ['上限', '-50.0mm']] },
  { title: '效果平衡', rows: [['偏移', '0.0'], ['体积', '100.0']] },
];

const VSep = () => <i className="w-px h-4 bg-black" />;

const CommandPanel = () => (
  <aside className="w-[200px] shrink-0 flex flex-col bg-[#444] pl-1.5 pr-[5px] text-xs text-[#e4e4e4]">
    <div className="flex h-7 -ml-1.5 -mr-[5px]">
      {[...tabs, null].map((t, i) => (
        <button key={i} aria-label={['创建', '修改', '层次', '运动', '显示', '实用程序'][i]} className={clsx('w-8 flex items-center justify-center border-r border-[#333]', i === 1 ? 'bg-[#444]' : 'bg-[#3d3d3d]')}>
          {t ? <Icon size={17}>{t}</Icon> : <Wrench size={17} color="#aaa" fill="#aaa" className="-scale-x-100" />}
        </button>
      ))}
    </div>
    <div className="flex items-center gap-[7px] mt-[7px]">
      <input aria-label="对象名称" defaultValue="组001" className="w-0 flex-1 h-[19px] bg-[#666] pl-[3px] font-bold outline-none" />
      <button aria-label="对象颜色" className="w-4 h-[19px] mr-0.5 bg-[#9be7f2] border border-black" />
    </div>
    <DropDown label="修改器列表" value="修改器列表" box="mt-2.5" className="h-5 bg-[#626262] pl-[3px] leading-none" />
    <div className="mt-[5px] h-[127px] border border-white bg-[#464646] outline outline-[#aaa]/40">
      <button className="w-full h-[17px] flex items-center bg-[#3f3f3f] text-left">
        <span className="w-[40px] flex items-center gap-2 pl-1.5"><Eye /><svg width="6" height="8" viewBox="0 0 6 8"><path d="M0 0l6 4-6 4z" fill="#ddd" /></svg></span>
        <span className="flex-1 bg-[#5b8ac6] italic pl-1 leading-[17px] text-white">挤压</span>
      </button>
    </div>
    <div className="flex items-center gap-1.5 h-[34px] pl-[3px]">
      <button aria-label="锁定堆栈" className="w-[18px] flex justify-center mr-0.5"><Icon size={14}><path d="M14 1l9 9-4 1-5 5 0 4-4-4-9 7 7-9-4-4h4l5-5z" fill={LIGHT} /></Icon></button>
      <VSep />
      <button aria-label="显示最终结果" className="w-[22px] h-[22px] bg-[#5b8ac6] rounded-sm flex items-center justify-center"><Icon size={18}><path d="M7 2h10v3H7zM9 5h6v17H9z" fill="#d6e6e0" stroke="#2a7f78" /></Icon></button>
      <VSep />
      <button aria-label="使唯一" className="ml-1"><Icon size={16}><circle cx="6" cy="6" r="5" fill={LIGHT} /><circle cx="14" cy="18" r="5" fill={TEAL} /><path d="M12 5h8v10M17 12l3 4 3-4" stroke={TEAL} strokeWidth="2" /></Icon></button>
      <button aria-label="移除修改器" className="ml-0.5 mr-1.5"><Trash2 size={15} color={LIGHT} /></button>
      <VSep />
      <button aria-label="配置修改器集" className="ml-0.5"><Icon size={16}><path d="M2 3h18v19H2zM2 9h18M5 12h5v3H5zM13 12h4v3h-4zM5 18h5M13 18h4" stroke={LIGHT} strokeWidth="2" /><path d="M10 13l2-4 9-8 3 3-9 8z" fill={ORANGE} /></Icon></button>
    </div>
    <div className="flex items-center gap-1 h-5 mt-0.5 px-1">
      <i className="flex-1 h-px bg-[#5e5e5e]" />
      <span className="w-3.5 h-1 border-y border-dotted border-[#ccc]" />
      <i className="flex-1 h-px bg-[#5e5e5e]" />
    </div>
    <div className="-ml-px w-[183px] bg-[#525252] px-2.5 pb-1.5">
      <button className="h-4 mb-1 w-full flex items-center font-bold text-white">
        <DownArrow className="w-1.5 -ml-1 text-[#bbb]" /><span className="ml-2">参数</span>
        <span className="ml-auto -mr-0.5 w-2 h-1.5 border-y border-dotted border-[#aaa]" />
      </button>
      {groups.map((g, gi) => (
        <fieldset key={g.title} className="border border-[#3a3a3a] mb-1.5 px-3 pt-1 pb-2 flex flex-col items-end gap-1.5">
          <legend className="-ml-2 px-0.5 leading-[15px]">{g.title}</legend>
          {g.check && (
            <label className="h-[18px] flex items-center gap-1 pr-3">
              <input type="checkbox" className="appearance-none w-2.5 h-2.5 bg-[#666] border border-[#444]" />{g.check}
            </label>
          )}
          {g.rows.map(([label, value], i) => (
            <div key={label} className="flex items-center gap-2.5">
              <label htmlFor={`p${gi}-${i}`} className="leading-none">{label}:</label>
              <Spinner id={`p${gi}-${i}`} value={value} />
            </div>
          ))}
        </fieldset>
      ))}
    </div>
  </aside>
);

/* ---------- bottom ---------- */

const StatusBar = () => (
  <div className="h-[50px] shrink-0 flex bg-[#444] text-xs text-[#e2e2e2]">
    <div className="w-[99px] flex flex-col gap-0.5 pt-0.5 pl-px">
      <input aria-label="宏录制器" className="h-[22px] bg-[#dcc3c3] border-r-2 border-b-2 border-white" />
      <div className="h-[22px] bg-white border border-[#777] pl-1 leading-5 text-black overflow-hidden whitespace-pre font-['Liberation_Mono','Noto_Sans_CJK_SC',monospace]">欢迎使用 MAXScr</div>
    </div>
    <div className="ml-[5px] pl-1 border-l border-black flex-1 flex flex-col justify-between pt-2 pb-0.5 text-[11px] leading-[15px]">
      <p>选择了 1 个 组</p>
      <p>单击并拖动以选择并移动对象</p>
    </div>
    <div className="w-[891px] flex flex-col justify-between pt-1.5 pb-px">
      <div className="flex items-center">
        <button aria-label="孤立切换" className="w-[18px]"><Icon size={15}><path d="M1 7V1h6M17 1h6v6M23 17v6h-6M7 23H1v-6" stroke={LIGHT} strokeWidth="2" /><path d="M7 7h10v10H7z" fill={TEAL} /></Icon></button>
        <button aria-label="选择锁定切换" className="ml-2.5"><Lock size={14} color={LIGHT} strokeWidth={3} /></button>
        <button aria-label="变换输入" className="ml-3 mr-3"><Icon size={15}><path d="M1 1h22v22H1z" stroke={LIGHT} strokeWidth="2" /><circle cx="12" cy="12" r="5" stroke={LIGHT} strokeWidth="2" /><path d="M12 2v5M12 17v5M2 12h5M17 12h5" stroke={LIGHT} strokeWidth="2.500" /></Icon></button>
        {[['X', '-3291.968mm'], ['Y', '14.785mm'], ['Z', '0.0mm']].map(([k, v]) => (
          <div key={k} className="flex items-center mr-[3px]">
            <label htmlFor={`pos${k}`} className="w-3">{k}:</label>
            <Spinner id={`pos${k}`} value={v} />
          </div>
        ))}
        <span className="ml-0.5 text-[11px]">栅格 = 1000.0mm</span>
      </div>
      <div className="flex items-center pl-[304px] gap-1">
        <button aria-label="自适应降级" className="w-[22px] h-5 bg-[#5b8ac6] border border-[#223] rounded-sm flex items-center justify-center"><Icon size={16}><path d="M12 2l9 5v10l-9 5-9-5V7zM3 7l9 5 9-5M12 12v10" stroke="#dde" strokeWidth="2" /></Icon></button>
        <button className="text-[11px]">添加时间标记</button>
      </div>
    </div>
  </div>
);

const apps: { name: string; bar?: string; on?: boolean; icon: React.ReactNode }[] = [
  { name: 'Cortana', icon: <circle cx="12" cy="12" r="7" stroke="#fff" strokeWidth="2" /> },
  { name: '任务视图', icon: <path d="M4 7h11v10H4zM4 3v2h11V3M4 21v-2h11v2M19 4v4M19 14v7M18 10h2v2h-2z" stroke="#fff" strokeWidth="1.400" /> },
  { name: 'Edge', icon: (
    <>
      <circle cx="12" cy="12" r="12" fill="#1579c8" />
      <path d="M1 8C4-2 22-3 24 9c1 7-8 8-10 5 3-5-3-9-13-6z" fill="#3ccf8e" />
      <path d="M0 13C1 6 10 5 13 9c-5-1-7 8 0 12-7 4-13-1-13-8z" fill="#23a8df" />
      <path d="M9 13c0 6 7 8 13 5-3 6-11 7-15 3-3-4-1-9 3-11-1 1-1 2-1 3z" fill="#0f4f9c" />
    </>) },
  { name: '文件资源管理器', bar: 'w-[31px]', icon: <><path d="M1 3h8l2 2h12v17H1z" fill="#f8c94f" /><path d="M1 3h8l2 3H1z" fill="#d99a23" /><path d="M5 22v-8h14v8h-4v-4H9v4z" fill="#3a93d8" /></> },
  { name: '截图工具', icon: <><path d="M1 10c0 8 8 10 15 5l6-8z" fill="#b9a6a2" /><ellipse cx="11" cy="8" rx="11" ry="6" fill="#f7f7f7" stroke="#c0392b" transform="rotate(-18 11 8)" /><path d="M11 5l5 12M19 9l-6 9M6 9l5 1" stroke="#666" strokeWidth="1.500" /><circle cx="19" cy="18" r="3" stroke="#2f8fc8" strokeWidth="2" /><circle cx="14" cy="21" r="2" stroke="#2f8fc8" strokeWidth="2" /></> },
  { name: 'Firefox', icon: <><path d="M1 12c0-5 2-7 3-10l3 4c2-1 4-1 5-1 0-2 1-4 3-5 1 3 4 3 6 7 6 8 0 17-9 17S1 18 1 12z" fill="#ff5a3b" /><path d="M14 0c1 3 8 5 9 12 0 6-5 10-10 9 5-3 6-8 2-12-2-2-3-5-1-9z" fill="#ffc531" /><circle cx="12" cy="13" r="5" fill="#7a35c9" /></> },
  { name: '画图', bar: 'w-10', icon: <><ellipse cx="11" cy="14" rx="11" ry="8" fill="#c9dcec" stroke="#8ab" /><circle cx="5" cy="13" r="2" fill="#d33" /><circle cx="9" cy="9" r="2" fill="#3a3" /><circle cx="14" cy="9" r="2" fill="#37c" /><circle cx="8" cy="18" r="2" fill="#e9a21b" /><path d="M13 23L20 5l2 1-7 18z" fill="#e08b2c" /><path d="M19 5l3-5 2 3-2 4z" fill="#d9b98a" /></> },
  { name: 'CAD 看图', bar: 'w-10', icon: <><rect x="1" y="1" width="22" height="22" rx="1" fill="#eef2fa" stroke="#6d86c0" strokeWidth="2" /><path d="M4 11C10 11 15 8 17 3l4 1C18 10 12 13 4 14z" fill="#2c6fb8" /><path d="M4 20c8 0 13-3 17-11v5c-4 6-9 8-17 7z" fill="#e9921b" /></> },
  { name: '优酷', bar: 'w-10', icon: <><rect width="23" height="24" rx="3" fill="#fff" /><path d="M8 4l8 5" stroke="#f0246d" strokeWidth="5" strokeLinecap="round" /><path d="M9 14l8-4" stroke="#19a8f0" strokeWidth="5" strokeLinecap="round" /><text x="2" y="23" fontSize="6" fontWeight="700" fill="#f0246d">YO</text><rect x="11" y="14" width="13" height="10" rx="3" fill="#4ba3e3" /><path d="M15 16v6M19 16v6" stroke="#fff" strokeWidth="2" /></> },
  { name: '3ds Max', bar: 'w-12', on: true, icon: <><path d="M0 0h24v24H0z" fill="#e3f1f0" /><text x="6" y="18" fontSize="19" fontWeight="800" fill="#14908c">3</text><text x="12" y="23" fontSize="5" fontWeight="700" fill="#14908c">MAX</text></> },
];

const Taskbar = () => (
  <footer className="h-10 shrink-0 flex bg-[#36371f]">
    <button aria-label="开始" className="w-12 flex items-center justify-center bg-[#1f2a26]">
      <svg width="16" height="16" viewBox="0 0 16 16"><path d="M0 2l7-1v7H0zM8 1l8-1v8H8zM0 9h7v6l-7-1zM8 9h8v7l-8-1z" fill="#fff" /></svg>
    </button>
    <label className="w-[344px] flex items-center gap-[11px] pl-3 bg-[#f2f2f2] border-t border-[#999] text-[#333]">
      <Search size={17} strokeWidth={1.6} className="-scale-x-100" />
      <input aria-label="搜索内容" placeholder="在这里输入你要搜索的内容" className="flex-1 bg-transparent text-sm outline-none placeholder:text-[#333]" />
    </label>
    {apps.map((a) => (
      <button key={a.name} aria-label={a.name} className={clsx('relative w-[49px] flex items-center justify-center', a.on && 'bg-[#64644c]')}>
        <Icon>{a.icon}</Icon>
        {a.bar && <i className={clsx('absolute bottom-0 h-0.5 bg-[#76b9ed]', a.bar)} />}
      </button>
    ))}
  </footer>
);

const SiteLogo = () => (
  <div className="absolute right-0 bottom-0 w-[499px] h-[250px] bg-white text-black">
    <div className="flex items-start pl-11 pt-[70px]">
      <svg width="136" height="112" viewBox="0 0 136 112" className="shrink-0">
        <path d="M6 46C22 10 84-12 120 6c16 9 16 28 6 44 4-18 0-28-14-33C80 6 34 14 6 46z" fill="#8ac32b" />
        <path d="M32 40l15-14v60H32zM66 20l20 14v50H66z" fill="#d5d9de" />
        <path d="M90 38l20-10 8 10v36l-28 10z" fill="#e4e6e8" />
        <path d="M20 52l10-6v36c-6-3-10-8-10-12zM40 24l24-10v74H40z" fill="#1d4fa3" />
        <path d="M46 25l8-4v66h-8z" fill="#4b86cf" />
        <path d="M76 44l16-8v46H76z" fill="#1d4fa3" />
        <path d="M5 52c4 32 32 42 62 36 32-6 56-26 64-54 4 32-24 60-62 70C26 116-6 88 5 52z" fill="#173f8f" />
      </svg>
      <div className="whitespace-nowrap pt-3">
        <div className="text-[55px] leading-[56px] font-black">土木工程网</div>
        <div className="text-[37px] leading-[36px] italic font-medium">www.civilcn.com</div>
      </div>
    </div>
  </div>
);

const App: React.FC = () => (
  <div className="relative h-screen min-w-[1420px] w-full flex flex-col overflow-hidden bg-white font-['Noto_Sans','Noto_Sans_CJK_SC',sans-serif]">
    <Header />
    <Toolbar />
    <Ribbon />
    <main className="flex-1 min-h-0 flex bg-[#444]">
      <div className="w-10 shrink-0 flex flex-col justify-end items-center gap-2.5 bg-[#303030] pb-0.5">
        <button aria-label="展开" className="w-[19px] h-[19px] -ml-0.5 bg-[#4f4f4f] rounded-sm flex items-center justify-center"><svg width="6" height="8" viewBox="0 0 6 8"><path d="M0 0l6 4-6 4z" fill="#ddd" /></svg></button>
        <button aria-label="视口布局" className="w-9 h-11 ml-1 rounded-sm bg-gradient-to-b from-[#5272a4] to-[#4480d2] flex items-center justify-center">
          <svg width="30" height="28" viewBox="0 0 30 28"><path d="M.5.5h29v27H.5zM15 0v28M0 14h30" fill="#566d90" stroke="#26364f" strokeWidth="1.500" /></svg>
        </button>
      </div>
      <SceneExplorer />
      <div className="flex-1 min-w-0 flex flex-col ml-0.5 mr-1.5">
        <div className="flex-1 min-h-0 grid grid-cols-[769fr_765fr] grid-rows-[409fr_407fr] gap-x-1 gap-y-[3px]">
          <TopView />
          <FrontView />
          <LeftView />
          <PerspectiveView />
        </div>
        <Timeline />
      </div>
      <CommandPanel />
    </main>
    <StatusBar />
    <Taskbar />
    <div className="h-0.5 shrink-0 bg-white" />
    <QuadMenu />
    <SiteLogo />
  </div>
);

export default App;
